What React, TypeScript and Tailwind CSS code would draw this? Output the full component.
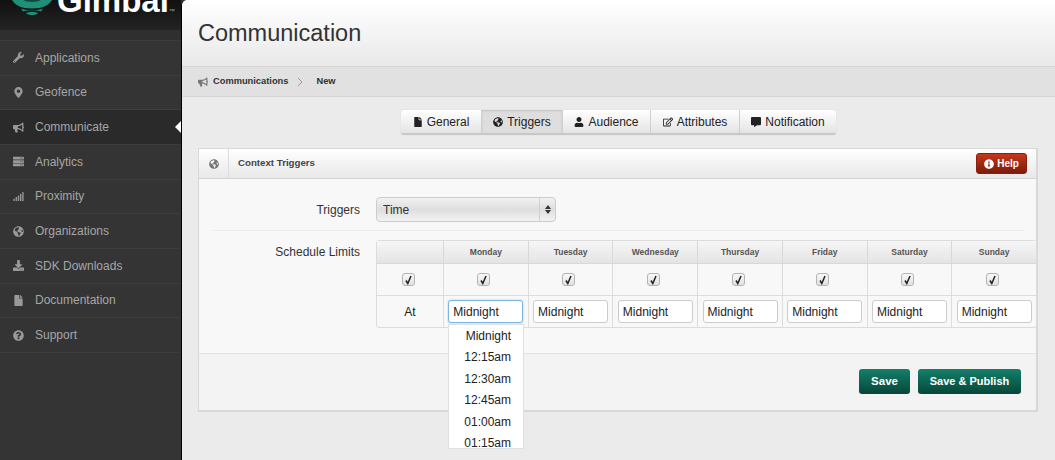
import React from 'react';
import {
  FaWrench, FaMapMarkerAlt, FaBullhorn, FaServer, FaSignal, FaGlobeAmericas,
  FaDownload, FaFile, FaQuestionCircle, FaUser, FaRegEdit, FaCommentAlt, FaInfoCircle,
} from 'react-icons/fa';

const font = "font-['Liberation_Sans',Arial,sans-serif]";

const navItems = [
  { label: 'Applications', icon: FaWrench },
  { label: 'Geofence', icon: FaMapMarkerAlt },
  { label: 'Communicate', icon: FaBullhorn, active: true },
  { label: 'Analytics', icon: FaServer },
  { label: 'Proximity', icon: FaSignal },
  { label: 'Organizations', icon: FaGlobeAmericas },
  { label: 'SDK Downloads', icon: FaDownload },
  { label: 'Documentation', icon: FaFile },
  { label: 'Support', icon: FaQuestionCircle },
];

const tabs = [
  { label: 'General', icon: FaFile, w: 'w-[80px]' },
  { label: 'Triggers', icon: FaGlobeAmericas, w: 'w-[81px]', active: true },
  { label: 'Audience', icon: FaUser, w: 'w-[88px]' },
  { label: 'Attributes', icon: FaRegEdit, w: 'w-[89px]' },
  { label: 'Notification', icon: FaCommentAlt, w: 'w-[97px]' },
];

const days = ['Monday', 'Tuesday', 'Wednesday', 'Thursday', 'Friday', 'Saturday', 'Sunday'];
const times = ['Midnight', '12:15am', '12:30am', '12:45am', '01:00am', '01:15am'];

function Logo() {
  return (
    <svg width="40" height="16" viewBox="0 0 40 16" className="shrink-0">
      <path d="M0 0 L40 0 C37 5 31 8.5 20 8.5 C9 8.5 3 5 0 0 Z" fill="#1f8f78" />
      <path d="M11 0 C14 2.5 26 2.5 29 0 Z" fill="#0f4a3f" />
      <path d="M9 8.5 C14 10.5 26 10.5 31 8.5 L29 11.5 C25 9.8 15 9.8 11 11.5 Z" fill="#1f8f78" />
      <path d="M14 13 C17 11.6 23 11.6 26 13 C24 15.8 16 15.8 14 13 Z" fill="#1f8f78" />
    </svg>
  );
}

function Check() {
  return (
    <span className="w-[13px] h-[13px] rounded-[3px] border border-[#b4b4b4] bg-gradient-to-b from-[#f8f8f8] to-[#e2e2e2] flex items-center justify-center">
      <svg width="9" height="10" viewBox="0 0 9 10">
        <path d="M2 5.5 L3.8 8.5 L7 1" fill="none" stroke="#222" strokeWidth="1.5" />
      </svg>
    </span>
  );
}

function Sidebar() {
  return (
    <aside className="w-[181px] shrink-0 bg-[#343434]">
      <div className="h-[30px] bg-gradient-to-b from-[#111] to-[#232323] flex items-start pl-[12px] overflow-hidden">
        <Logo />
        <span className="ml-[5px] mt-[-18px] text-[33px] leading-[38px] font-bold text-white">Gimbal</span>
        <span className="mt-[8px] text-[6px] leading-[6px] text-[#aaa]">™</span>
      </div>
      <div className="h-[11px] bg-[#2f2f2f] border-b border-[#3c3c3c]" />
      {navItems.map((item) => {
        const Icon = item.icon;
        return (
          <div
            key={item.label}
            className={`relative h-[34.67px] flex items-center border-b border-[#3e3e3e] text-[12px] text-[#a6a6a6] ${
              item.active ? 'bg-[#2a2a2a]' : ''
            }`}
          >
            <span className="w-[35px] flex justify-center pl-[2px] shrink-0">
              <Icon className="text-[#999] text-[11px]" />
            </span>
            {item.label}
            {item.active && (
              <span className="absolute right-0 top-[11px] w-0 h-0 border-y-[6px] border-y-transparent border-r-[6px] border-r-white" />
            )}
          </div>
        );
      })}
    </aside>
  );
}

function Tabs() {
  return (
    <div className="flex justify-center pt-[13px]">
      <div className="flex h-[25px] rounded-[3px] border-b-2 border-[#c8c8c8] shadow-[0_0_1px_#bbb] overflow-hidden">
        {tabs.map((tab, i) => {
          const Icon = tab.icon;
          return (
            <div
              key={tab.label}
              className={`${tab.w} flex items-center justify-center gap-[4px] text-[12px] text-[#222] ${
                i > 0 ? 'border-l border-[#cfcfcf]' : ''
              } ${tab.active ? 'bg-[#dedede] shadow-[inset_0_1px_2px_#c4c4c4]' : 'bg-gradient-to-b from-[#fff] to-[#e4e4e4]'}`}
            >
              <Icon className="text-[10px] text-[#222]" />
              {tab.label}
            </div>
          );
        })}
      </div>
    </div>
  );
}

function ScheduleTable() {
  return (
    <div className="relative w-[661px] border border-[#dcdcdc] rounded-[3px] text-[12px] text-[#222]">
      <div className="flex h-[23px] bg-gradient-to-b from-[#f6f6f6] to-[#e4e4e4] border-b border-[#d8d8d8]">
        <div className="w-[66px]" />
        {days.map((d) => (
          <div key={d} className="flex-1 border-l border-[#d8d8d8] flex items-center justify-center text-[8.5px] font-bold text-[#555]">
            {d}
          </div>
        ))}
      </div>
      <div className="flex h-[32px] border-b border-[#dcdcdc]">
        <div className="w-[66px] flex items-center justify-center pr-[4px]"><Check /></div>
        {days.map((d) => (
          <div key={d} className="flex-1 border-l border-[#dcdcdc] flex items-center justify-center pr-[4px]"><Check /></div>
        ))}
      </div>
      <div className="flex h-[31px]">
        <div className="w-[66px] flex items-center justify-center">At</div>
        {days.map((d, i) => (
          <div key={d} className="flex-1 border-l border-[#dcdcdc] flex items-center justify-center">
            <div
              className={`w-[75px] h-[23px] rounded-[3px] bg-white flex items-center pl-[4px] ${
                i === 0 ? 'border border-[#7db4e0] shadow-[0_0_2px_#9cc8ec]' : 'border border-[#ccc]'
              }`}
            >
              Midnight
            </div>
          </div>
        ))}
      </div>
      <div className="absolute left-[71px] top-[83px] w-[76px] h-[125px] pt-[1px] bg-white border border-[#e0e0e0] overflow-hidden">
        {times.map((t) => (
          <div key={t} className="h-[21.4px] leading-[21.4px] text-right pr-[12px] text-[12px] text-[#222]">
            {t}
          </div>
        ))}
      </div>
    </div>
  );
}

function Panel() {
  return (
    <div className="ml-[16px] mt-[13px] w-[840px] h-[264px] border border-[#d8d8d8] border-b-2 border-r-2 bg-[#f8f8f8]">
      <div className="h-[30px] flex items-center border-b border-[#d4d4d4] bg-gradient-to-b from-[#fff] to-[#e8e8e8]">
        <div className="w-[30px] h-full flex items-center justify-center border-r border-[#dcdcdc]">
          <FaGlobeAmericas className="text-[10px] text-[#777]" />
        </div>
        <span className="ml-[9px] text-[9.7px] font-bold text-[#444]">Context Triggers</span>
        <div className="ml-auto mr-[9px] w-[51px] h-[21px] rounded-[3px] bg-gradient-to-b from-[#c4391d] to-[#7d1a0a] border border-[#8a1f0e] flex items-center justify-center gap-[3px] text-[10px] font-bold text-white">
          <FaInfoCircle className="text-[10px]" />
          Help
        </div>
      </div>
      <div className="h-[175px] border-b border-[#e2e2e2]">
        <div className="flex pt-[18px] h-[52px] mx-[12px] border-b border-[#ececec]">
          <div className="w-[149px] shrink-0 text-right text-[12px] leading-[26px] text-[#333]">Triggers</div>
          <div className="ml-[16px] w-[180px] h-[25px] rounded-[4px] border border-[#ccc] bg-gradient-to-b from-[#f2f2f2] via-[#dedede] to-[#f2f2f2] flex items-center text-[12px] text-[#333]">
            <span className="flex-1 pl-[6px]">Time</span>
            <span className="w-[16px] h-full border-l border-[#d0d0d0] flex flex-col items-center justify-center gap-[1px]">
              <span className="w-0 h-0 border-x-[3px] border-x-transparent border-b-[4px] border-b-[#333]" />
              <span className="w-0 h-0 border-x-[3px] border-x-transparent border-t-[4px] border-t-[#333]" />
            </span>
          </div>
        </div>
        <div className="flex pt-[9px] ml-[12px]">
          <div className="w-[149px] shrink-0 text-right text-[12px] leading-[24px] text-[#333]">Schedule Limits</div>
          <div className="ml-[16px] shrink-0"><ScheduleTable /></div>
        </div>
      </div>
      <div className="flex justify-end gap-[8px] pt-[15px] pr-[15px] bg-[#f3f3f3] h-[56px]">
        <div className="w-[51px] h-[25px] rounded-[3px] bg-gradient-to-b from-[#14806a] to-[#07473a] flex items-center justify-center text-[11.5px] font-bold text-white">Save</div>
        <div className="w-[103px] h-[25px] rounded-[3px] bg-gradient-to-b from-[#14806a] to-[#07473a] flex items-center justify-center text-[11px] font-bold text-white">Save &amp; Publish</div>
      </div>
    </div>
  );
}

export default function App() {
  return (
    <div className={`${font} flex h-[460px] w-[1055px] overflow-hidden bg-[#343434]`}>
      <Sidebar />
      <main className="flex-1 rounded-tl-[6px] border-l border-black bg-[#ebebeb] overflow-hidden">
        <div className="h-[66px] bg-gradient-to-b from-[#fff] to-[#e9e9e9] pl-[16px] pt-[17px] text-[23.5px] leading-[32px] text-[#333]">
          Communication
        </div>
        <div className="h-[31px] pt-[1px] bg-[#e1e1e1] border-y border-[#d6d6d6] flex items-center pl-[16px] text-[9.3px] font-bold text-[#333]">
          <FaBullhorn className="text-[10px] text-[#777] mr-[5px]" />
          Communications
          <svg width="6" height="10" viewBox="0 0 6 10" className="ml-[9px] mr-[13px]">
            <path d="M1 1 L5 5 L1 9" fill="none" stroke="#999" strokeWidth="1" />
          </svg>
          New
        </div>
        <Tabs />
        <Panel />
      </main>
    </div>
  );
}
